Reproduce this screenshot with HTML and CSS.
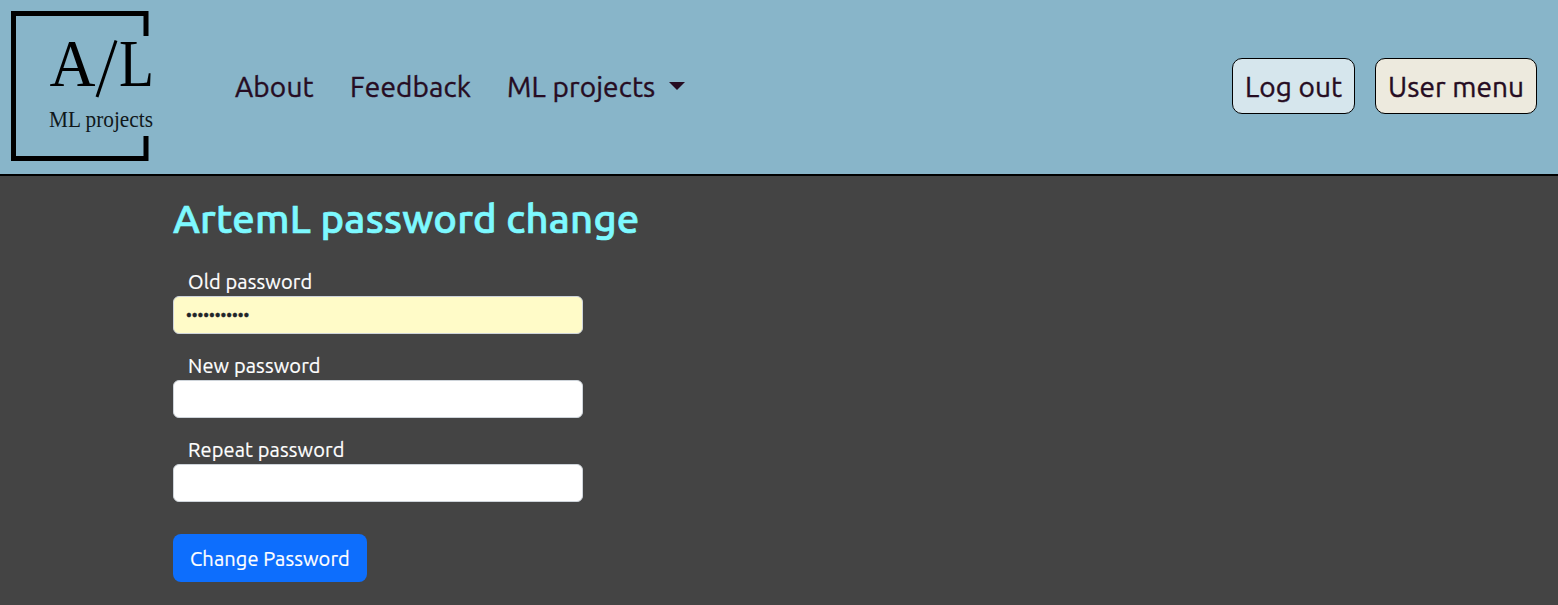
FILE: index.html
```html
<!DOCTYPE html>
<html lang="en">
<head>
<meta charset="utf-8">
<title>ArtemL password change</title>
<link rel="stylesheet" href="styles.css">
</head>
<body>
<header class="navbar">
  <a class="brand" href="#">
    <svg class="logo" width="160" height="174" viewBox="0 0 160 174" role="img" aria-label="A/L ML projects">
      <path d="M146 36V13.5H13.5V158.500H146V136" fill="none" stroke="#000" stroke-width="5"/>
      <text class="logo-letters" x="49.500" y="86" textLength="46" lengthAdjust="spacingAndGlyphs">A</text>
      <path d="M97 97L116 40.500" fill="none" stroke="#000" stroke-width="3"/>
      <text class="logo-letters" x="119" y="86" textLength="35" lengthAdjust="spacingAndGlyphs">L</text>
      <text class="logo-caption" x="49" y="127" textLength="104" lengthAdjust="spacingAndGlyphs">ML projects</text>
    </svg>
  </a>
  <nav class="links">
    <a class="link link-about" href="#">About</a>
    <a class="link link-feedback" href="#">Feedback</a>
    <a class="link link-projects" href="#">ML projects</a><span class="caret"></span>
  </nav>
  <div class="actions">
    <a class="action action-logout" href="#">Log out</a>
    <a class="action action-menu" href="#">User menu</a>
  </div>
</header>
<main class="content">
  <h1 class="title">ArtemL password change</h1>
  <form class="form">
    <div class="field">
      <label class="label" for="old">Old password</label>
      <input class="input input-filled" id="old" type="password" value="12345678901">
    </div>
    <div class="field">
      <label class="label" for="new">New password</label>
      <input class="input" id="new" type="password">
    </div>
    <div class="field">
      <label class="label" for="repeat">Repeat password</label>
      <input class="input" id="repeat" type="password">
    </div>
    <button class="submit" type="button">Change Password</button>
  </form>
</main>
</body>
</html>
```
FILE: styles.css
```css
* { box-sizing: border-box; }
body {
  margin: 0;
  min-height: 605px;
  background: #444;
  font-family: Ubuntu, "Noto Sans", sans-serif;
}
.navbar {
  display: flex;
  align-items: center;
  height: 176px;
  padding-right: 21px;
  background: #88b5c9;
  border-bottom: 2px solid #000;
}
.brand { display: block; height: 174px; }
.logo { display: block; }
.logo-letters { font: 68px "Liberation Serif", serif; }
.logo-caption { font: 23px "Liberation Serif", serif; fill: #10181b; }
.links { display: flex; align-items: center; margin-left: 75px; }
.link {
  color: #260c22;
  font-size: 28px;
  line-height: 42px;
  letter-spacing: 0.14px;
  -webkit-text-stroke: 0.4px #260c22;
  text-decoration: none;
  white-space: nowrap;
}
.link-about { width: 115px; }
.link-feedback { width: 157px; }
.link-projects { width: 162px; }
.caret {
  margin-bottom: 3px;
  border: 8px solid transparent;
  border-top-color: #260c22;
  border-bottom: 0;
}
.actions { display: flex; gap: 20px; margin-left: auto; margin-bottom: 2px; }
.action {
  height: 56px;
  padding: 0 0 0 12px;
  border: 1px solid #000;
  border-radius: 10px;
  color: #260c22;
  font-size: 28px;
  line-height: 56px;
  letter-spacing: 0.08px;
  -webkit-text-stroke: 0.4px #260c22;
  text-decoration: none;
  white-space: nowrap;
}
.action-logout { width: 123px; background: #d6e6ed; }
.action-menu { width: 162px; background: #edeade; }
.content { padding: 19px 0 0 173px; }
.title {
  margin: 0 0 26px;
  color: #7df9ff;
  font-size: 40px;
  font-weight: 500;
  line-height: 48px;
  letter-spacing: 0.2px;
  -webkit-text-stroke: 0.7px #7df9ff;
}
.form { width: 410px; }
.field { display: flex; flex-direction: column; margin-bottom: 19px; }
.label {
  padding: 0 0 2px 15px;
  color: #fff;
  font-size: 20px;
  line-height: 25px;
  letter-spacing: 0.12px;
  -webkit-text-stroke: 0.2px #fff;
}
.input {
  width: 410px;
  height: 38px;
  padding: 6px 12px;
  border: 1px solid #ced4da;
  border-radius: 6px;
  background: #fff;
  color: #212529;
  font: 16px Ubuntu, "Noto Sans", sans-serif;
}
.input-filled { background: #fffbc8; -webkit-text-stroke: 0.4px #212529; }
.submit {
  width: 194px;
  height: 48px;
  margin-top: 13px;
  padding: 2px 0 0 17px;
  border: 0;
  border-radius: 8px;
  background: #0d6efd;
  color: #fff;
  font: 20px/46px Ubuntu, "Noto Sans", sans-serif;
  letter-spacing: 0.1px;
  -webkit-text-stroke: 0.2px #fff;
  text-align: left;
  white-space: nowrap;
}
```
